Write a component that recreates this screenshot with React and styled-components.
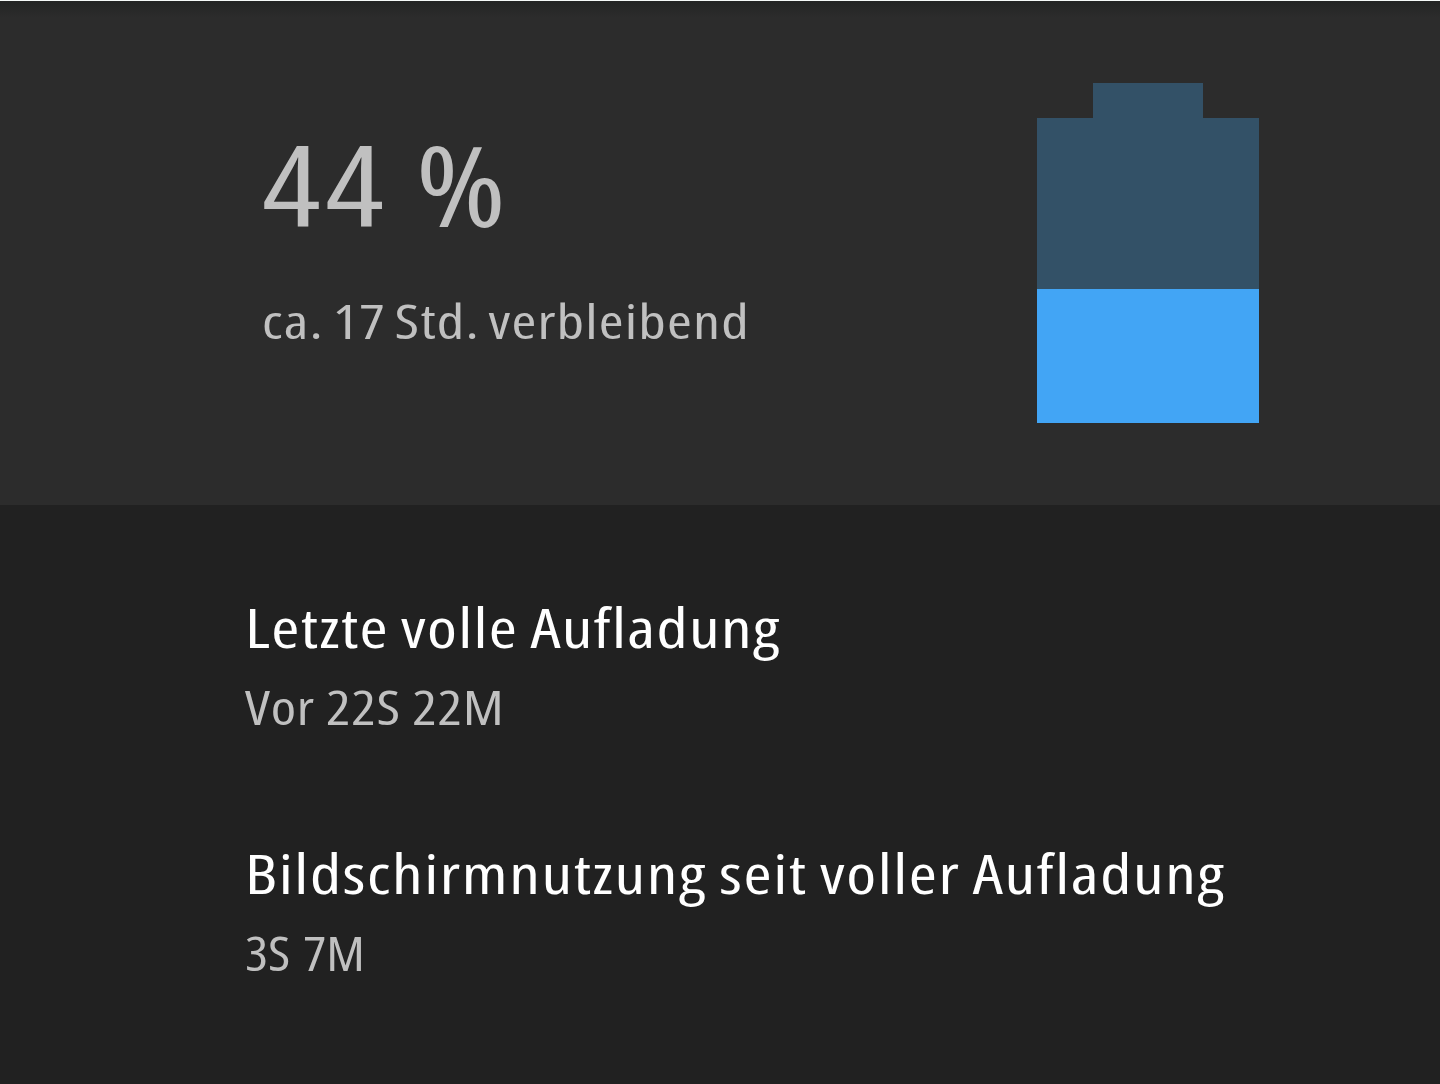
import React from "react"
import styled, { createGlobalStyle } from "styled-components"

const GlobalStyle = createGlobalStyle`
  body {
    margin: 0;
    background: #212121;
    font-family: "Open Sans", "Noto Sans", sans-serif;
  }
`

const Screen = styled.main`
  height: 1084px;
  overflow: hidden;
  background: #212121;
`

const Header = styled.header`
  box-sizing: border-box;
  display: flex;
  justify-content: space-between;
  height: 505px;
  padding: 82px 181px 0 262px;
  border-top: 1px solid #f5faf8;
  background: linear-gradient(#232524, #2c2c2c 17px);
`

const Summary = styled.div`
  width: 500px;
  padding-top: 21px;
`

// condensed face widened a little, gives squarish letters
const Line = styled.div`
  display: flex;
  align-items: center;
  height: ${p => p.$height}px;
  color: ${p => p.$color || "#c0c0c0"};
  font-size: ${p => p.$size}px;
  font-stretch: 75%;
  letter-spacing: ${p => p.$spacing || 0}px;
  word-spacing: ${p => p.$gap || 0}px;
  line-height: 1;
  white-space: nowrap;
  font-variant-ligatures: none;
  transform: scaleX(${p => p.$stretch});
  transform-origin: left;
`

const Battery = styled.div`
  display: flex;
  flex-direction: column;
  align-items: center;
  width: 222px;
`

const Cap = styled.div`
  width: 110px;
  height: 35px;
  background: #335167;
`

const Cell = styled.div`
  display: flex;
  align-items: flex-end;
  width: 100%;
  height: 305px;
  background: #335167;
`

const Charge = styled.div`
  width: 100%;
  background: #42a5f5;
`

const Stats = styled.section`
  display: flex;
  flex-direction: column;
  gap: 86px;
  width: 1000px;
  padding: 82px 0 0 244.5px;
`

const percent = 44

const stats = [
  {
    title: "Letzte volle Aufladung",
    value: "Vor 22S 22M",
    titleSpacing: 1.05,
    valueSpacing: 0.6,
    valueStretch: 1.2,
  },
  {
    title: "Bildschirmnutzung seit voller Aufladung",
    value: "3S 7M",
    titleSpacing: 1.25,
    valueSpacing: 0,
    valueGap: 2.5,
    valueStretch: 1.13,
  },
]

export default class App extends React.PureComponent {
  render() {
    return (
      <Screen>
        <GlobalStyle />
        <Header>
          <Summary>
            <Line $height={160} $size={112} $stretch={1.23} $spacing={3.8} $gap={-2.5}>
              {percent} %
            </Line>
            <Line $height={114} $size={48} $stretch={1.25} $spacing={0.95} $gap={-3}>
              ca. 17 Std. verbleibend
            </Line>
          </Summary>
          <Battery>
            <Cap />
            <Cell>
              <Charge style={{ height: `${percent}%` }} />
            </Cell>
          </Battery>
        </Header>
        <Stats>
          {stats.map(stat => (
            <div key={stat.title}>
              <Line
                $height={80}
                $size={54}
                $color="#fff"
                $stretch={1.26}
                $spacing={stat.titleSpacing}
                $gap={-1.5}
              >
                {stat.title}
              </Line>
              <Line
                $height={80}
                $size={48}
                $stretch={stat.valueStretch}
                $spacing={stat.valueSpacing}
                $gap={stat.valueGap}
              >
                {stat.value}
              </Line>
            </div>
          ))}
        </Stats>
      </Screen>
    )
  }
}
